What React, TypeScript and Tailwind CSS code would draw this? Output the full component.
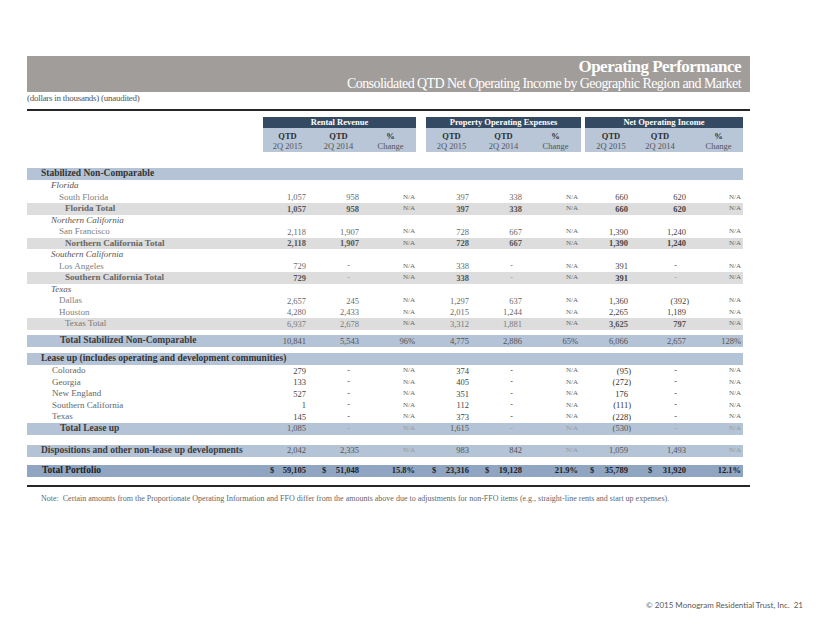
import React from "react";

type Kind =
  | "section"
  | "region"
  | "item"
  | "subtotal"
  | "subtotalLight"
  | "total"
  | "lease"
  | "disp"
  | "portfolio";

interface Row {
  kind: Kind;
  label: string;
  values?: string[];
  mt?: string;
}

const GRID =
  "grid grid-cols-[236px_49px_53px_51px_10px_51px_53px_51px_4px_52px_57px_49px]";

// right padding of each number column, so the figures line up like the slide
const PAD = [
  "pr-[6px]",
  "pr-[6px]",
  "pr-[1px]",
  "pr-[8px]",
  "pr-[8px]",
  "pr-[3px]",
  "pr-[9px]",
  "pr-[8px]",
  "pr-[2px]",
];
const DOLLAR_PAD = [
  "pl-[7px]",
  "pl-[10px]",
  "",
  "pl-[6px]",
  "pl-[8px]",
  "",
  "pl-[5px]",
  "pl-[11px]",
  "",
];

const rows: Row[] = [
  { kind: "section", label: "Stabilized Non-Comparable" },
  { kind: "region", label: "Florida" },
  { kind: "item", label: "South Florida", values: ["1,057", "958", "N/A", "397", "338", "N/A", "660", "620", "N/A"] },
  { kind: "subtotal", label: "Florida Total", values: ["1,057", "958", "N/A", "397", "338", "N/A", "660", "620", "N/A"] },
  { kind: "region", label: "Northern California" },
  { kind: "item", label: "San Francisco", values: ["2,118", "1,907", "N/A", "728", "667", "N/A", "1,390", "1,240", "N/A"] },
  { kind: "subtotal", label: "Northern California Total", values: ["2,118", "1,907", "N/A", "728", "667", "N/A", "1,390", "1,240", "N/A"] },
  { kind: "region", label: "Southern California" },
  { kind: "item", label: "Los Angeles", values: ["729", "-", "N/A", "338", "-", "N/A", "391", "-", "N/A"] },
  { kind: "subtotal", label: "Southern California Total", values: ["729", "~-", "N/A", "338", "~-", "N/A", "391", "~-", "N/A"] },
  { kind: "region", label: "Texas" },
  { kind: "item", label: "Dallas", values: ["2,657", "245", "N/A", "1,297", "637", "N/A", "1,360", "(392)", "N/A"] },
  { kind: "item", label: "Houston", values: ["4,280", "2,433", "N/A", "2,015", "1,244", "N/A", "2,265", "1,189", "N/A"] },
  { kind: "subtotalLight", label: "Texas Total", values: ["6,937", "2,678", "N/A", "3,312", "1,881", "N/A", "3,625", "797", "N/A"] },
  { kind: "total", label: "Total Stabilized Non-Comparable", mt: "mt-[5.5px]", values: ["10,841", "5,543", "96%", "4,775", "2,886", "65%", "6,066", "2,657", "128%"] },
  { kind: "section", label: "Lease up (includes operating and development communities)", mt: "mt-[6px]" },
  { kind: "lease", label: "Colorado", values: ["279", "-", "N/A", "374", "-", "N/A", "(95)", "-", "N/A"] },
  { kind: "lease", label: "Georgia", values: ["133", "-", "N/A", "405", "-", "N/A", "(272)", "-", "N/A"] },
  { kind: "lease", label: "New England", values: ["527", "-", "N/A", "351", "-", "N/A", "176", "-", "N/A"] },
  { kind: "lease", label: "Southern California", values: ["1", "-", "N/A", "112", "-", "N/A", "(111)", "-", "N/A"] },
  { kind: "lease", label: "Texas", values: ["145", "-", "N/A", "373", "-", "N/A", "(228)", "-", "N/A"] },
  { kind: "total", label: "Total Lease up", values: ["1,085", "~-", "~N/A", "1,615", "~-", "~N/A", "(530)", "~-", "~N/A"] },
  { kind: "disp", label: "Dispositions and other non-lease up developments", mt: "mt-[10px]", values: ["2,042", "2,335", "~N/A", "983", "842", "~N/A", "1,059", "1,493", "~N/A"] },
  { kind: "portfolio", label: "Total Portfolio", mt: "mt-[8px]", values: ["$59,105", "$51,048", "15.8%", "$23,316", "$19,128", "21.9%", "$35,789", "$31,920", "12.1%"] },
];

const style: Record<Kind, { row: string; label: string; num: string; noi: string }> = {
  section: { row: "h-[12px] bg-[#b4c3d6]", label: "pl-[14px] text-[9.5px] font-bold text-[#333]", num: "", noi: "" },
  region: { row: "h-[11.5px]", label: "pl-[24px] text-[9px] italic text-[#555]", num: "", noi: "" },
  item: { row: "h-[11.5px]", label: "pl-[32px] text-[9px] text-[#808080]", num: "text-[#6a6a6a]", noi: "text-[#444]" },
  subtotal: { row: "h-[11.5px] bg-[#dddddd]", label: "pl-[38px] text-[9px] font-bold text-[#666]", num: "font-bold text-[#555]", noi: "font-bold text-[#444]" },
  subtotalLight: { row: "h-[11.5px] bg-[#dddddd]", label: "pl-[38px] text-[9px] text-[#777]", num: "text-[#7a7a7a]", noi: "font-bold text-[#555]" },
  total: { row: "h-[12px] bg-[#b4c3d6]", label: "pl-[33px] text-[9.5px] font-bold text-[#3c3c3c]", num: "text-[#555]", noi: "text-[#555]" },
  lease: { row: "h-[11.5px]", label: "pl-[25px] text-[9px] text-[#666]", num: "text-[#444]", noi: "text-[#333]" },
  disp: { row: "h-[12px] bg-[#b4c3d6]", label: "pl-[14px] text-[9.5px] font-bold text-[#3c3c3c]", num: "text-[#555]", noi: "text-[#555]" },
  portfolio: { row: "h-[12px] bg-[#8fa5c1]", label: "pl-[15px] text-[9.5px] font-bold text-[#1f1f1f]", num: "font-bold text-[#1f1f1f]", noi: "font-bold text-[#1f1f1f]" },
};

function Value({ v, i, tone }: { v: string; i: number; tone: string }) {
  const light = v.startsWith("~");
  const text = light ? v.slice(1) : v;
  const color = light ? "text-[#a0a0a0] font-normal" : tone;

  if (text.startsWith("$")) {
    return (
      <div className={`flex items-center justify-between text-[8.5px] ${PAD[i]} ${DOLLAR_PAD[i]} ${color}`}>
        <span>$</span>
        <span>{text.slice(1)}</span>
      </div>
    );
  }
  if (text === "N/A") {
    return <div className={`flex items-center justify-end text-[7px] ${PAD[i]} ${light ? "text-[#9a9a9a]" : "text-[#666]"}`}>N/A</div>;
  }
  if (text === "-") {
    return (
      <div className={`flex items-center justify-end text-[8px] ${PAD[i]} ${color}`}>
        <span className="mr-[9px]">-</span>
      </div>
    );
  }
  return (
    <div className={`flex items-center justify-end text-[8.5px] ${PAD[i]} ${color}`}>
      <span className={text.startsWith("(") ? "-mr-[3px]" : ""}>{text}</span>
    </div>
  );
}

function TableRow({ row }: { row: Row }) {
  const s = style[row.kind];
  const cells: React.ReactNode[] = [];
  (row.values ?? []).forEach((v, i) => {
    if (i === 3 || i === 6) cells.push(<div key={`g${i}`} />);
    cells.push(<Value key={i} v={v} i={i} tone={i >= 6 ? s.noi : s.num} />);
  });
  return (
    <div className={`${GRID} ${s.row} ${row.mt ?? ""} w-[716px] leading-none`}>
      <div className={`flex items-center whitespace-nowrap ${s.label}`}>{row.label}</div>
      {cells}
    </div>
  );
}

function HeaderBlock() {
  const groups = [
    { title: "Rental Revenue", start: "col-start-2" },
    { title: "Property Operating Expenses", start: "col-start-6" },
    { title: "Net Operating Income", start: "col-start-10" },
  ];
  const subs = [
    ["QTD", "2Q 2015", ""],
    ["QTD", "2Q 2014", ""],
    ["%", "Change", ""],
    ["QTD", "2Q 2015", ""],
    ["QTD", "2Q 2014", ""],
    ["%", "Change", ""],
    ["QTD", "2Q 2015", ""],
    ["QTD", "2Q 2014", "pr-[11px]"],
    ["%", "Change", ""],
  ];
  const starts = ["col-start-2", "col-start-3", "col-start-4", "col-start-6", "col-start-7", "col-start-8", "col-start-10", "col-start-11", "col-start-12"];
  return (
    <div className={`${GRID} w-[716px] grid-rows-[11px_12px_12px] leading-none`}>
      {groups.map((g) => (
        <div
          key={g.title}
          className={`${g.start} col-span-3 row-start-1 flex items-center justify-center bg-[#344a63] text-[8.5px] font-bold text-white`}
        >
          {g.title}
        </div>
      ))}
      {subs.map(([top, bottom, pad], i) => (
        <React.Fragment key={i}>
          <div className={`${starts[i]} row-start-2 flex items-end justify-center bg-[#b8c6d8] text-[8.5px] font-bold text-[#2e2e2e] ${pad}`}>
            {top}
          </div>
          <div className={`${starts[i]} row-start-3 flex items-center justify-center bg-[#b8c6d8] text-[8.5px] text-[#555] ${pad}`}>
            {bottom}
          </div>
        </React.Fragment>
      ))}
    </div>
  );
}

export default function App() {
  return (
    <div className="flex h-[635px] w-[822px] flex-col overflow-hidden bg-white font-['Liberation_Serif',serif]">
      <div className="pl-[27px] pt-[56px]">
        {/* Title bar */}
        <div className="flex h-[36px] w-[723px] flex-col items-end bg-[#a19d9a] pr-[9px] pt-[2px] text-white">
          <div className="text-[17px] font-bold leading-[17px] tracking-[-0.03em]">Operating Performance</div>
          <div className="mt-[2px] text-[14px] leading-[14px] tracking-[-0.04em]">
            Consolidated QTD Net Operating Income by Geographic Region and Market
          </div>
        </div>
        <div className="mt-[1px] text-[9px] leading-[10px] tracking-[-0.03em] text-[#555]">(dollars in thousands) (unaudited)</div>
        <div className="mt-[6px] h-[2px] w-[723px] bg-[#262626]" />

        <div className="mt-[6px]">
          <HeaderBlock />
        </div>

        <div className="mt-[16px]">
          {rows.map((r) => (
            <TableRow key={r.label + r.kind} row={r} />
          ))}
        </div>

        <div className="mt-[8px] h-[2px] w-[723px] bg-[#262626]" />
        <div className="mt-[6px] pl-[14px] text-[8px] leading-[11px] text-[#666]">
          Note:&nbsp; Certain amounts from the Proportionate Operating Information and FFO differ from the amounts above due to
          adjustments for non-FFO items (e.g., straight-line rents and start up expenses).
        </div>
      </div>

      <div className="mt-auto flex justify-end pb-[24px] pr-[19px] font-['Lato',sans-serif] text-[8px] leading-[11px] text-[#595959]">
        © 2015 Monogram Residential Trust, Inc.&nbsp;&nbsp;21
      </div>
    </div>
  );
}
